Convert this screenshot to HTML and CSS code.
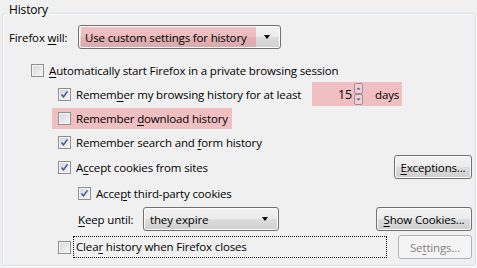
FILE: index.html
```html
<!DOCTYPE html>
<html lang="en">
<head>
    <meta charset="UTF-8">
    <title>History</title>
    <link rel="stylesheet" href="styles.css">
</head>
<body>
<fieldset class="history">
    <legend>History</legend>

    <div class="row row-will">
        <span class="label label-will">Firefox <u>w</u>ill:</span>
        <div class="menu menu-wide">
            <span class="menu-text mark">Use custom settings for history</span>
            <span class="arrow"></span>
        </div>
    </div>

    <div class="row row-auto level-1">
        <span class="check"></span>
        <span class="text"><u>A</u>utomatically start Firefox in a private browsing session</span>
    </div>

    <div class="row level-2">
        <span class="check on"><svg viewBox="0 0 13 13"><path d="M3 6.5 L5.3 9.3 L10 2.8"/></svg></span>
        <span class="text text-browse">Remem<u>b</u>er my browsing history for at least</span>
        <div class="days mark">
            <span class="num">15</span>
            <span class="spin">
                <span class="spin-up"><svg viewBox="0 0 7 4"><path d="M0.5 3.5 L3.5 0.5 L6.5 3.5 Z"/></svg></span>
                <span class="spin-down"><svg viewBox="0 0 7 4"><path d="M0.5 0.5 L3.5 3.5 L6.5 0.5 Z"/></svg></span>
            </span>
            <span class="unit">days</span>
        </div>
    </div>

    <div class="row level-2">
        <div class="mark mark-row">
            <span class="check"></span>
            <span class="text">Remember <u>d</u>ownload history</span>
        </div>
    </div>

    <div class="row level-2">
        <span class="check on"><svg viewBox="0 0 13 13"><path d="M3 6.5 L5.3 9.3 L10 2.8"/></svg></span>
        <span class="text">Remember search and <u>f</u>orm history</span>
    </div>

    <div class="row row-cookies level-2">
        <span class="check on"><svg viewBox="0 0 13 13"><path d="M3 6.5 L5.3 9.3 L10 2.8"/></svg></span>
        <span class="text grow">A<u>c</u>cept cookies from sites</span>
        <span class="button button-exceptions"><u>E</u>xceptions...</span>
    </div>

    <div class="row row-third level-3">
        <span class="check on"><svg viewBox="0 0 13 13"><path d="M3 6.5 L5.3 9.3 L10 2.8"/></svg></span>
        <span class="text">Acce<u>p</u>t third-party cookies</span>
    </div>

    <div class="row row-keep level-3">
        <span class="label label-keep"><u>K</u>eep until:</span>
        <div class="menu menu-keep">
            <span class="menu-text">they expire</span>
            <span class="arrow"></span>
        </div>
        <span class="grow"></span>
        <span class="button button-cookies"><u>S</u>how Cookies...</span>
    </div>

    <div class="row row-clear level-2">
        <span class="check"></span>
        <span class="text focus">Clea<u>r</u> history when Firefox closes</span>
        <span class="button button-settings disabled">Se<u>t</u>tings...</span>
    </div>
</fieldset>
</body>
</html>
```

FILE: styles.css
```css
body {
    margin: 0;
    width: 477px;
    height: 268px;
    overflow: hidden;
    background-color: #f0f0f0;
    font-family: "Open Sans", sans-serif;
    font-size: 11.5px;
    letter-spacing: -0.15px;
    color: #000;
}

u {
    text-decoration: underline;
    text-underline-offset: 2px;
}

.history {
    box-sizing: border-box;
    height: 266px;
    margin: 0 1px 0 2px;
    padding: 0 3px 0 0;
    border: 1px solid #d5dfe5;
    border-radius: 3px;
    box-shadow: inset 1px 1px 0 #fff, 1px 1px 0 #fff;
}

.history legend {
    margin-left: 4px;
    padding: 0 2px 6px;
    line-height: 20px;
    font-size: 12px;
}

.row {
    display: flex;
    align-items: center;
    height: 24px;
}

.row-will { margin-top: -1px; padding-left: 6px; }
.row-auto { margin-top: 9px; }
.row-cookies { margin-top: 1px; }
.row-third { margin-top: 2px; }
.row-keep { margin-top: 2px; }
.row-clear { margin-top: 4px; }

.level-1 { padding-left: 28px; }
.level-2 { padding-left: 55px; }
.level-3 { padding-left: 75px; }

.label-will { width: 69px; }
.label-keep { width: 65px; }

.grow { flex: 1; }

.text {
    margin-left: 5px;
    white-space: nowrap;
}

.text-browse { width: 236px; }

/* checkboxes */
.check {
    box-sizing: border-box;
    flex: none;
    width: 13px;
    height: 13px;
    border: 1px solid #8f8f8f;
    background: linear-gradient(135deg, #d4d6d9, #f7f7f7);
    box-shadow: inset 0 0 0 1px #f4f4f4;
}

.check svg {
    display: block;
    width: 11px;
    height: 11px;
}

.check svg path {
    fill: none;
    stroke: #3d5290;
    stroke-width: 1.8;
}

/* annotation highlight */
.mark {
    background-color: rgba(240, 80, 90, 0.3);
}

.mark-row {
    display: flex;
    align-items: center;
    height: 21px;
    margin-left: -6px;
    padding: 0 4px 0 6px;
}

/* dropdowns */
.menu {
    box-sizing: border-box;
    display: flex;
    align-items: center;
    height: 24px;
    padding: 0 2px;
    border: 1px solid #707070;
    border-radius: 3px;
    background: linear-gradient(#f2f2f2, #ebebeb 50%, #dddddd 50%, #cfcfcf);
    box-shadow: inset 0 0 0 1px #fcfcfc;
}

.menu-wide { width: 203px; }
.menu-keep { width: 136px; }

.menu-text {
    flex: 1;
    align-self: stretch;
    display: flex;
    align-items: center;
    margin: 1px 0;
    padding-left: 4px;
    white-space: nowrap;
}

.menu-wide .menu-text { flex: none; width: 171px; }

.arrow {
    margin: 0 8px 0 auto;
    border-left: 3.5px solid transparent;
    border-right: 3.5px solid transparent;
    border-top: 4px solid #000;
}

/* number box */
.days {
    display: flex;
    align-items: center;
    width: 90px;
    height: 24px;
}

.num {
    width: 40px;
    text-align: right;
    font-size: 12.5px;
}

.spin {
    display: flex;
    flex-direction: column;
    margin-left: 2px;
    width: 9px;
}

.spin-up, .spin-down {
    box-sizing: border-box;
    display: flex;
    align-items: center;
    justify-content: center;
    height: 11px;
    border: 1px solid #9d8f9a;
    border-radius: 2px;
    background: rgba(255, 255, 255, 0.25);
}

.spin svg {
    width: 5px;
    height: 3px;
}

.spin svg path {
    fill: #4a5a9c;
}

.unit { margin-left: 12px; }

/* buttons */
.button {
    box-sizing: border-box;
    display: flex;
    align-items: center;
    justify-content: center;
    height: 24px;
    border: 1px solid #707070;
    border-radius: 3px;
    background: linear-gradient(#f2f2f2, #ebebeb 50%, #dddddd 50%, #cfcfcf);
    box-shadow: inset 0 0 0 1px #fcfcfc;
    white-space: nowrap;
}

.button-exceptions { width: 78px; }
.button-cookies { width: 96px; }

.button-settings {
    width: 74px;
    margin-left: 12px;
}

.button.disabled {
    border-color: #adb2b5;
    background: #f4f4f4;
    box-shadow: none;
    color: #838383;
}

.focus {
    flex: 1;
    margin-left: 3px;
    padding: 0 0 0 2px;
    line-height: 20px;
    outline: 1px dotted #000;
}
```
